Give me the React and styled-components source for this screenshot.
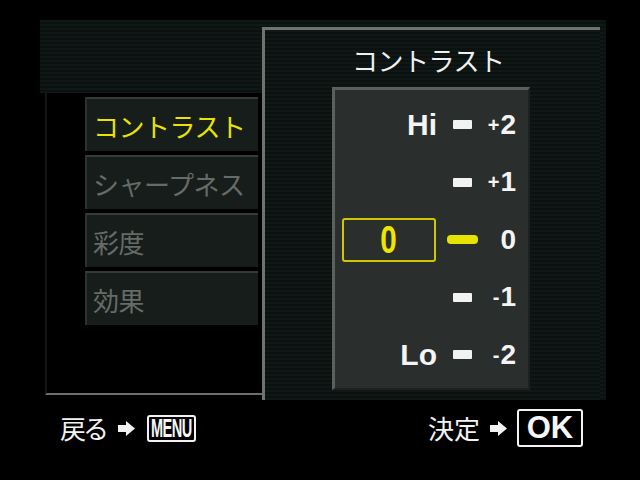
import React from "react";
import styled, { createGlobalStyle } from "styled-components";

const GlobalStyle = createGlobalStyle`
  html, body {
    margin: 0;
    padding: 0;
    background: #000;
  }
`;

const menuItems = ["コントラスト", "シャープネス", "彩度", "効果"];

const levels = [
  { label: "Hi", sign: "+", value: "2" },
  { label: "", sign: "+", value: "1" },
  { label: "", sign: "", value: "0", selected: true },
  { label: "", sign: "-", value: "1" },
  { label: "Lo", sign: "-", value: "2" },
];

const Arrow = () => (
  <svg width="19" height="15" viewBox="0 0 19 15">
    <polygon points="1,4 9,4 9,0 18,7.5 9,15 9,11 1,11" fill="#f2f2f2" />
  </svg>
);

export default function App() {
  return (
    <>
      <GlobalStyle />
      <Screen>
        <Frame>
          <LeftCol>
            <Header />
            <ListArea>
              {menuItems.map((item, i) => (
                <MenuItem key={i} active={i === 0}>
                  {item}
                </MenuItem>
              ))}
            </ListArea>
          </LeftCol>

          <RightPanel>
            <Title>コントラスト</Title>
            <ValueBox>
              {levels.map((lv, i) => (
                <LevelRow key={i}>
                  {lv.selected ? (
                    <SelectedBox>
                      <SelectedDigit>0</SelectedDigit>
                    </SelectedBox>
                  ) : (
                    <LevelLabel>{lv.label}</LevelLabel>
                  )}
                  <DashCell>
                    <Dash selected={lv.selected} />
                  </DashCell>
                  <LevelValue>
                    {lv.sign && <Sign>{lv.sign}</Sign>}
                    {lv.value}
                  </LevelValue>
                </LevelRow>
              ))}
            </ValueBox>
          </RightPanel>
        </Frame>

        <Footer>
          <FooterGroup gap={11}>
            <FooterText narrow>戻る</FooterText>
            <Arrow />
            <MenuKey>
              <MenuKeyText>MENU</MenuKeyText>
            </MenuKey>
          </FooterGroup>
          <FooterGroup gap={9}>
            <FooterText>決定</FooterText>
            <Arrow />
            <OkKey>OK</OkKey>
          </FooterGroup>
        </Footer>
      </Screen>
    </>
  );
}

const scan = `repeating-linear-gradient(
  to bottom,
  #0f1816 0px,
  #0f1816 2px,
  #0a110f 2px,
  #0a110f 4px
)`;

const Screen = styled.div`
  width: 640px;
  height: 480px;
  background: #000;
  box-sizing: border-box;
  padding: 20px 0 0 40px;
  display: flex;
  flex-direction: column;
  overflow: hidden;
  font-family: "Noto Sans CJK JP", "Liberation Sans", sans-serif;
`;

const Frame = styled.div`
  width: 566px;
  height: 380px;
  display: flex;
  align-items: flex-start;
  background: ${scan};
`;

const LeftCol = styled.div`
  width: 222px;
  height: 380px;
  display: flex;
  flex-direction: column;
  background: #000;
`;

const Header = styled.div`
  height: 73px;
  flex: none;
  background: ${scan};
`;

const ListArea = styled.div`
  height: 302px;
  margin-left: 5px;
  box-sizing: border-box;
  border-left: 2px solid #111614;
  border-bottom: 2px solid #6b706e;
  padding: 4px 4px 0 38px;
  display: flex;
  flex-direction: column;
  gap: 4px;
`;

const MenuItem = styled.div`
  height: 54px;
  box-sizing: border-box;
  background: #161d1b;
  border-top: 2px solid #343b39;
  border-left: 2px solid #2a312f;
  padding: 4px 0 0 6px;
  font-size: 26px;
  line-height: 46px;
  letter-spacing: -0.5px;
  white-space: nowrap;
  overflow: hidden;
  color: ${(p) => (p.active ? "#e8e400" : "#666b68")};
`;

const RightPanel = styled.div`
  margin-top: 7px;
  width: 338px;
  height: 373px;
  box-sizing: border-box;
  border-left: 3px solid #6e7472;
  border-top: 3px solid #6e7472;
  background: ${scan};
  display: flex;
  flex-direction: column;
`;

const Title = styled.div`
  margin: 10px 0 0 0;
  height: 40px;
  padding-left: 87px;
  font-size: 26px;
  line-height: 40px;
  letter-spacing: -0.5px;
  color: #f0f0f0;
`;

const ValueBox = styled.div`
  margin: 7px 0 0 67px;
  width: 198px;
  height: 303px;
  box-sizing: border-box;
  background: #2a2f2d;
  border-top: 3px solid #5a605e;
  border-left: 3px solid #5a605e;
  border-right: 2px solid #1d2220;
  border-bottom: 2px solid #1d2220;
  padding: 6px 12px 0 7px;
  display: flex;
  flex-direction: column;
`;

const LevelRow = styled.div`
  height: 57.5px;
  display: grid;
  grid-template-columns: 95px 41px 38px;
  align-items: center;
  font-family: "Liberation Sans", Arial, sans-serif;
  font-weight: bold;
  color: #f4f4f4;
`;

const LevelLabel = styled.div`
  justify-self: end;
  font-size: 30px;
  line-height: 1;
`;

const SelectedBox = styled.div`
  width: 94px;
  height: 44px;
  box-sizing: border-box;
  border: 2px solid #cfc800;
  border-radius: 3px;
  display: flex;
  align-items: center;
  justify-content: center;
`;

const SelectedDigit = styled.span`
  display: inline-block;
  font-size: 38px;
  line-height: 1;
  color: #ece600;
  transform: scaleX(0.78);
`;

const DashCell = styled.div`
  justify-self: end;
  width: 31px;
  display: flex;
  justify-content: center;
`;

const Dash = styled.div`
  width: ${(p) => (p.selected ? "32px" : "19px")};
  height: 9px;
  border-radius: ${(p) => (p.selected ? "4px" : "1px")};
  background: ${(p) => (p.selected ? "#e8e200" : "#f2f2f2")};
`;

const LevelValue = styled.div`
  justify-self: end;
  font-size: 28px;
  line-height: 1;
`;

const Sign = styled.span`
  font-size: 20px;
  vertical-align: 2px;
  margin-right: 1px;
`;

const Footer = styled.div`
  margin: 8px 0 0 20px;
  width: 523px;
  height: 40px;
  display: flex;
  justify-content: space-between;
  align-items: center;
`;

const FooterGroup = styled.div`
  display: flex;
  align-items: center;
  gap: ${(p) => p.gap}px;
`;

const FooterText = styled.span`
  font-size: 26px;
  line-height: 1;
  letter-spacing: ${(p) => (p.narrow ? "-3px" : "0")};
  color: #f2f2f2;
`;

const MenuKey = styled.div`
  width: 49px;
  height: 27px;
  box-sizing: border-box;
  border: 2px solid #f2f2f2;
  border-radius: 3px;
  display: flex;
  align-items: center;
  justify-content: center;
  overflow: hidden;
`;

const MenuKeyText = styled.span`
  display: inline-block;
  font-family: "Liberation Sans", Arial, sans-serif;
  font-weight: bold;
  font-size: 26px;
  line-height: 1;
  color: #f6f6f6;
  transform: scaleX(0.56);
  letter-spacing: -1px;
`;

const OkKey = styled.div`
  width: 66px;
  height: 38px;
  box-sizing: border-box;
  border: 2px solid #f2f2f2;
  border-radius: 3px;
  display: flex;
  align-items: center;
  justify-content: center;
  font-family: "Liberation Sans", Arial, sans-serif;
  font-weight: bold;
  font-size: 31px;
  color: #f6f6f6;
`;
